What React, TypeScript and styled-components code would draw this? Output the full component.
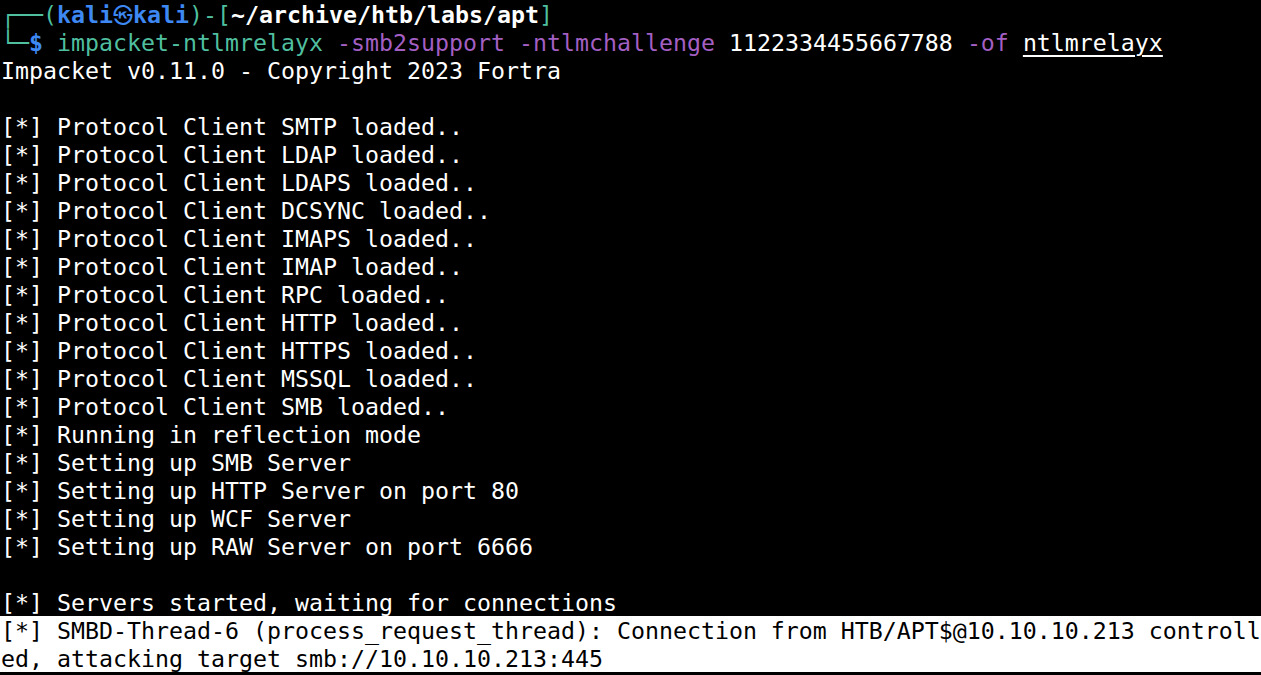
import React from "react";
import styled, { createGlobalStyle } from "styled-components";

const GlobalStyle = createGlobalStyle`
  html, body {
    margin: 0;
    padding: 0;
    background: #000000;
  }
  body {
    width: 1261px;
    height: 675px;
    overflow: hidden;
  }
`;

const TermColors = {
  Teal: "#4fbf9f",
  Blue: "#3d88f2",
  Purple: "#a35fc2",
  White: "#ffffff",
  Black: "#000000",
};

type Tone = keyof typeof TermColors;

const Terminal = styled.div`
  width: 1261px;
  height: 675px;
  background-color: ${TermColors.Black};
  color: ${TermColors.White};
  font-family: "DejaVu Sans Mono", "Liberation Mono", monospace;
  font-size: 23.25px;
  padding-left: 1px;
  box-sizing: border-box;
`;

const Line = styled.div<{ $selected?: boolean }>`
  height: 28px;
  line-height: 28px;
  padding-top: 1px;
  box-sizing: border-box;
  white-space: pre;
  margin-left: ${(p) => (p.$selected ? "-1px" : "0")};
  padding-left: ${(p) => (p.$selected ? "1px" : "0")};
  background-color: ${(p) => (p.$selected ? TermColors.White : "transparent")};
  color: ${(p) => (p.$selected ? TermColors.Black : TermColors.White)};
`;

const Seg = styled.span<{ $tone?: Tone; $bold?: boolean; $underline?: boolean }>`
  color: ${(p) => (p.$tone ? TermColors[p.$tone] : "inherit")};
  font-weight: ${(p) => (p.$bold ? 700 : 400)};
  text-decoration: ${(p) => (p.$underline ? "underline" : "none")};
  text-decoration-thickness: 2px;
  text-underline-offset: 4px;
`;

const KaliMark = styled.span`
  display: inline-block;
  width: 20px;
  height: 27px;
  text-align: center;
  color: ${TermColors.Blue};
  font-family: "Noto Sans CJK KR", "DejaVu Sans", sans-serif;
  font-size: 20px;
  font-weight: 700;
  vertical-align: top;
`;

const output = [
  "Impacket v0.11.0 - Copyright 2023 Fortra",
  "",
  "[*] Protocol Client SMTP loaded..",
  "[*] Protocol Client LDAP loaded..",
  "[*] Protocol Client LDAPS loaded..",
  "[*] Protocol Client DCSYNC loaded..",
  "[*] Protocol Client IMAPS loaded..",
  "[*] Protocol Client IMAP loaded..",
  "[*] Protocol Client RPC loaded..",
  "[*] Protocol Client HTTP loaded..",
  "[*] Protocol Client HTTPS loaded..",
  "[*] Protocol Client MSSQL loaded..",
  "[*] Protocol Client SMB loaded..",
  "[*] Running in reflection mode",
  "[*] Setting up SMB Server",
  "[*] Setting up HTTP Server on port 80",
  "[*] Setting up WCF Server",
  "[*] Setting up RAW Server on port 6666",
  "",
  "[*] Servers started, waiting for connections",
];

const selected = [
  "[*] SMBD-Thread-6 (process_request_thread): Connection from HTB/APT$@10.10.10.213 controll",
  "ed, attacking target smb://10.10.10.213:445",
];

export default function App() {
  return (
    <>
      <GlobalStyle />
      <Terminal>
        <Line>
          <Seg $tone="Teal">┌──(</Seg>
          <Seg $tone="Blue" $bold>
            kali
          </Seg>
          <KaliMark>㉿</KaliMark>
          <Seg $tone="Blue" $bold>
            kali
          </Seg>
          <Seg $tone="Teal">)-[</Seg>
          <Seg $tone="White" $bold>
            ~/archive/htb/labs/apt
          </Seg>
          <Seg $tone="Teal">]</Seg>
        </Line>
        <Line>
          <Seg $tone="Teal">└─</Seg>
          <Seg $tone="Blue" $bold>
            $
          </Seg>{" "}
          <Seg $tone="Teal">impacket-ntlmrelayx</Seg>{" "}
          <Seg $tone="Purple">-smb2support -ntlmchallenge</Seg> 1122334455667788{" "}
          <Seg $tone="Purple">-of</Seg> <Seg $underline>ntlmrelayx</Seg>
        </Line>
        {output.map((text, i) => (
          <Line key={i}>{text}</Line>
        ))}
        {selected.map((text, i) => (
          <Line key={`s${i}`} $selected>
            {text}
          </Line>
        ))}
      </Terminal>
    </>
  );
}
